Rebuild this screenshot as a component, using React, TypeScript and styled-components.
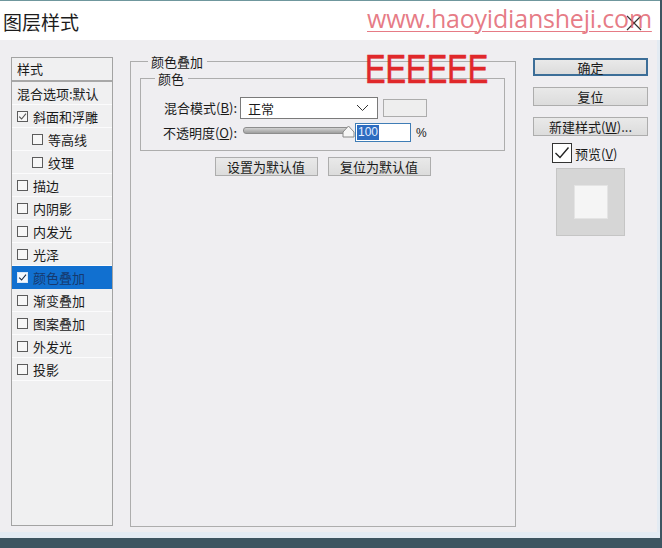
import * as React from 'react';
import styled, { createGlobalStyle } from "styled-components";

const GlobalStyle = createGlobalStyle`
    html, body {
        margin: 0;
        padding: 0;
        background: #efeef1;
    }
    body {
        font-family: "Noto Sans CJK SC", "Liberation Sans", sans-serif;
        font-size: 13px;
        color: #1a1a1a;
    }
`;

const CJK = `"Noto Sans CJK SC", "Liberation Sans", sans-serif`;

const Dialog = styled.div`
    position: relative;
    width: 662px;
    height: 548px;
    box-sizing: border-box;
    display: flex;
    flex-direction: column;
    background: #efeef1;
    border-right: 2px solid #3e5561;
    overflow: hidden;
`;

const TitleBar = styled.div`
    height: 40px;
    box-sizing: border-box;
    border-top: 1px solid #6f979d;
    background: #ffffff;
    display: flex;
    align-items: center;
    padding: 0 18px 0 3px;
`;

const Title = styled.div`
    font-family: ${CJK};
    font-size: 19px;
    line-height: 24px;
    color: #1c1c1c;
    flex: 1;
    margin-top: 2px;
`;

const CloseButton = styled.div`
    width: 16px;
    height: 16px;
    margin-top: 5px;
    display: flex;
`;

const Watermark = styled.div`
    position: absolute;
    left: 367px;
    top: 1px;
    font-family: "Open Sans", "Liberation Sans", sans-serif;
    font-size: 25px;
    line-height: 34px;
    color: rgba(226, 100, 112, 0.85);
    text-decoration: underline;
    text-decoration-thickness: 1px;
    text-underline-offset: 3px;
    letter-spacing: -0.2px;
    pointer-events: none;
`;

const ColorNote = styled.div`
    position: absolute;
    left: 365px;
    top: 49px;
    font-family: "Liberation Sans", sans-serif;
    font-size: 40px;
    line-height: 40px;
    color: #e0282b;
    -webkit-text-stroke: 0.6px #e0282b;
    transform: scaleX(0.77);
    transform-origin: left top;
    pointer-events: none;
`;

const Body = styled.div`
    flex: 1;
    display: flex;
    align-items: flex-start;
    padding: 14px 0 0 11px;
    border-right: 3px solid #e3ebf3;
`;

const BottomEdge = styled.div`
    height: 16px;
    box-sizing: border-box;
    border-top: 6px solid #e4ecf4;
    background: #3e5561;
`;

/* ---- left style list ---- */

const ListBox = styled.div`
    width: 102px;
    height: 469px;
    margin-top: 3px;
    box-sizing: border-box;
    border: 1px solid #a3a3a3;
    background: #f0f0f1;
`;

const ListHeader = styled.div`
    height: 24px;
    box-sizing: border-box;
    line-height: 22px;
    padding-left: 5px;
    border-bottom: 2px solid #a8a8a8;
`;

const ListRow = styled.div<{ $indent?: boolean; $selected?: boolean }>`
    height: 23px;
    box-sizing: border-box;
    display: flex;
    align-items: center;
    padding-left: ${p => (p.$indent ? 20 : 5)}px;
    border-bottom: 1px solid ${p => (p.$selected ? "#1170d0" : "#fbfbfc")};
    background: ${p => (p.$selected ? "#1170d0" : "transparent")};
    color: ${p => (p.$selected ? "#16396e" : "#1a1a1a")};
    white-space: nowrap;
`;

const SmallBox = styled.span<{ $selected?: boolean }>`
    width: 11px;
    height: 11px;
    box-sizing: border-box;
    border: 1px solid ${p => (p.$selected ? "#d8e6f6" : "#5c5c5c")};
    background: ${p => (p.$selected ? "#f4f8fd" : "#f7f7f7")};
    margin-right: 5px;
    display: flex;
    flex-shrink: 0;
`;

/* ---- middle panel ---- */

const Group = styled.fieldset<{ $outer?: boolean }>`
    margin: ${p => (p.$outer ? "0 0 0 17px" : "2px 0 0 0")};
    box-sizing: border-box;
    border: 1px solid #adadad;
    padding: ${p => (p.$outer ? "0 10px 0 9px" : "11px 0 8px 0")};
    width: ${p => (p.$outer ? "386px" : "auto")};
    height: ${p => (p.$outer ? "473px" : "auto")};
    min-width: 0;
`;

const Legend = styled.legend<{ $offset: number }>`
    padding: 0 4px 0 3px;
    margin-left: ${p => p.$offset}px;
    font-size: 13px;
    line-height: 15px;
`;

const FormRow = styled.div<{ $gap?: number }>`
    display: flex;
    align-items: center;
    margin-top: ${p => p.$gap ?? 0}px;
`;

const Label = styled.div`
    width: 96px;
    text-align: right;
    white-space: nowrap;
    line-height: 18px;
`;

const Select = styled.div`
    width: 138px;
    height: 22px;
    margin-left: 3px;
    box-sizing: border-box;
    border: 1px solid #7a7a7a;
    background: #ffffff;
    display: flex;
    align-items: center;
    justify-content: space-between;
    padding: 0 8px 0 7px;
`;

const Swatch = styled.div<{ $color: string }>`
    width: 44px;
    height: 18px;
    margin-left: 5px;
    box-sizing: border-box;
    border: 1px solid #acacac;
    background: ${p => p.$color};
`;

const Slider = styled.div`
    position: relative;
    width: 112px;
    height: 16px;
    margin-left: 6px;
`;

const Track = styled.div`
    position: absolute;
    left: 0;
    right: 4px;
    top: 2px;
    height: 5px;
    border-radius: 3px;
    border: 1px solid #8d8d8d;
    background: linear-gradient(#d2d2d2, #9e9e9e);
`;

const Thumb = styled.svg`
    position: absolute;
    right: 0;
    top: 0;
`;

const NumberInput = styled.div`
    width: 56px;
    height: 19px;
    box-sizing: border-box;
    border: 1px solid #3f7db6;
    background: #ffffff;
    display: flex;
    align-items: center;
    padding-left: 1px;
`;

const Selection = styled.span`
    background: #2d6cc0;
    color: #e6efff;
    font-family: "Liberation Sans", sans-serif;
    font-size: 12px;
    line-height: 15px;
    padding: 0 1px;
`;

const Percent = styled.span`
    margin-left: 5px;
    font-family: "Liberation Sans", sans-serif;
    font-size: 12px;
`;

const ButtonRow = styled.div`
    display: flex;
    justify-content: center;
    gap: 10px;
    margin-top: 6px;
`;

const Button = styled.div<{ $width?: number; $primary?: boolean }>`
    width: ${p => p.$width ?? 115}px;
    height: ${p => (p.$primary ? 18 : 19)}px;
    box-sizing: border-box;
    border: ${p => (p.$primary ? "2px solid #3c6e98" : "1px solid #adadad")};
    background: linear-gradient(#e9e9e9, #dcdcdc);
    display: flex;
    align-items: center;
    justify-content: center;
    font-size: 13px;
    white-space: nowrap;
`;

/* ---- right column ---- */

const SideColumn = styled.div`
    width: 115px;
    margin-left: 17px;
    margin-top: 4px;
    display: flex;
    flex-direction: column;
    gap: 11px;
`;

const PreviewToggle = styled.div`
    display: flex;
    align-items: center;
    gap: 3px;
    margin-top: -4px;
    padding-left: 19px;
`;

const BigBox = styled.span`
    width: 20px;
    height: 20px;
    box-sizing: border-box;
    border: 1px solid #333;
    background: #fff;
    display: flex;
`;

const PreviewFrame = styled.div`
    width: 69px;
    height: 68px;
    margin: -6px 0 0 23px;
    box-sizing: border-box;
    border: 1px solid #c5c5c5;
    background: #d6d6d6;
    display: flex;
    align-items: center;
    justify-content: center;
`;

const PreviewInner = styled.div`
    width: 34px;
    height: 34px;
    box-sizing: border-box;
    border: 1px solid #e4e4e4;
    background: #f5f5f5;
`;

type StyleItem = { name: string; checked: boolean; indent?: boolean; box: boolean };

const styleItems: StyleItem[] = [
    { name: "混合选项:默认", checked: false, box: false },
    { name: "斜面和浮雕", checked: true, box: true },
    { name: "等高线", checked: false, indent: true, box: true },
    { name: "纹理", checked: false, indent: true, box: true },
    { name: "描边", checked: false, box: true },
    { name: "内阴影", checked: false, box: true },
    { name: "内发光", checked: false, box: true },
    { name: "光泽", checked: false, box: true },
    { name: "颜色叠加", checked: true, box: true },
    { name: "渐变叠加", checked: false, box: true },
    { name: "图案叠加", checked: false, box: true },
    { name: "外发光", checked: false, box: true },
    { name: "投影", checked: false, box: true },
];

const SELECTED = "颜色叠加";

const SmallCheck: React.FC<{ dark?: boolean }> = ({ dark }) => (
    <svg width="9" height="9" viewBox="0 0 9 9">
        <path d="M1.2 4.6 L3.6 7 L8 1.6" fill="none" stroke={dark ? "#1a2a44" : "#555"} strokeWidth="1.1"/>
    </svg>
);

const App: React.FC = () => {
    return (
        <>
            <GlobalStyle/>
            <Dialog>
                <TitleBar>
                    <Title>图层样式</Title>
                    <CloseButton>
                        <svg width="16" height="16" viewBox="0 0 16 16">
                            <path d="M1 1 L15 15 M15 1 L1 15" stroke="#333" strokeWidth="1.2" fill="none"/>
                        </svg>
                    </CloseButton>
                </TitleBar>

                <Body>
                    <ListBox>
                        <ListHeader>样式</ListHeader>
                        {styleItems.map(item => {
                            const selected = item.name === SELECTED;
                            return (
                                <ListRow key={item.name} $indent={item.indent} $selected={selected}>
                                    {item.box ? (
                                        <SmallBox $selected={selected}>
                                            {item.checked ? <SmallCheck dark={selected}/> : null}
                                        </SmallBox>
                                    ) : null}
                                    {item.name}
                                </ListRow>
                            );
                        })}
                    </ListBox>

                    <Group $outer>
                        <Legend $offset={8}>颜色叠加</Legend>
                        <Group>
                            <Legend $offset={14}>颜色</Legend>
                            <FormRow>
                                <Label>混合模式(<u>B</u>):</Label>
                                <Select>
                                    <span>正常</span>
                                    <svg width="13" height="8" viewBox="0 0 13 8">
                                        <path d="M1 1 L6.5 6.5 L12 1" fill="none" stroke="#333" strokeWidth="1"/>
                                    </svg>
                                </Select>
                                <Swatch $color="#eeeeee"/>
                            </FormRow>
                            <FormRow $gap={4}>
                                <Label>不透明度(<u>O</u>):</Label>
                                <Slider>
                                    <Track/>
                                    <Thumb width="13" height="13" viewBox="0 0 13 13">
                                        <path d="M1 12 L1 7 L6.5 1 L12 7 L12 12 Z" fill="#f6f6f6" stroke="#8a8a8a" strokeWidth="1"/>
                                    </Thumb>
                                </Slider>
                                <NumberInput>
                                    <Selection>100</Selection>
                                </NumberInput>
                                <Percent>%</Percent>
                            </FormRow>
                        </Group>
                        <ButtonRow>
                            <Button $width={103}>设置为默认值</Button>
                            <Button $width={103}>复位为默认值</Button>
                        </ButtonRow>
                    </Group>

                    <SideColumn>
                        <Button $primary>确定</Button>
                        <Button>复位</Button>
                        <Button>新建样式(<u>W</u>)...</Button>
                        <PreviewToggle>
                            <BigBox>
                                <svg width="18" height="18" viewBox="0 0 18 18">
                                    <path d="M2.5 9 L7 13.5 L15.5 3.5" fill="none" stroke="#222" strokeWidth="1.4"/>
                                </svg>
                            </BigBox>
                            <span>预览(<u>V</u>)</span>
                        </PreviewToggle>
                        <PreviewFrame>
                            <PreviewInner/>
                        </PreviewFrame>
                    </SideColumn>
                </Body>

                <BottomEdge/>

                <Watermark>www.haoyidiansheji.com</Watermark>
                <ColorNote>EEEEEE</ColorNote>
            </Dialog>
        </>
    );
};

export default App;
